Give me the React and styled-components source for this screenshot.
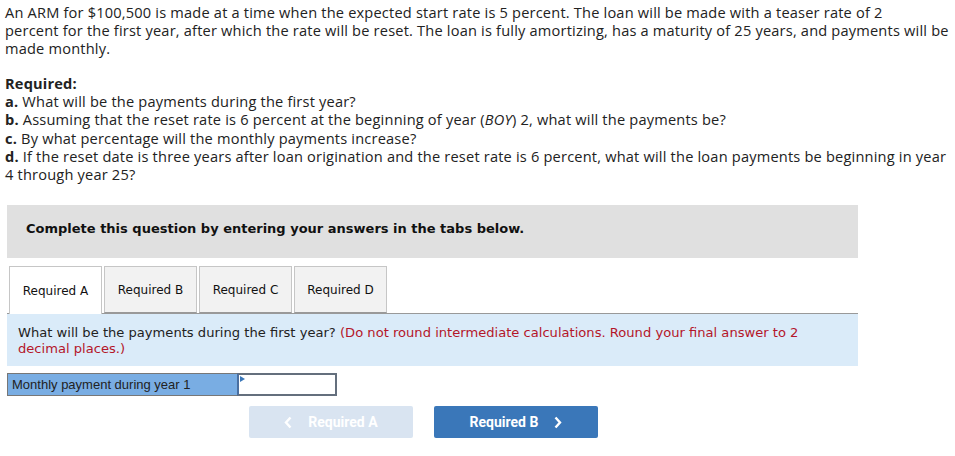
import React from "react";
import styled, { createGlobalStyle } from "styled-components";

const GlobalStyle = createGlobalStyle`
  body {
    margin: 0;
    background: #fff;
  }
`;

const tabs = ["Required A", "Required B", "Required C", "Required D"];

const ChevronIcon = ({ dir }) => (
  <svg width="8" height="13" viewBox="0 0 8 13" fill="none">
    <path
      d={dir === "left" ? "M6.5 1.5 L2 6.5 L6.5 11.5" : "M1.5 1.5 L6 6.5 L1.5 11.5"}
      stroke="currentColor"
      strokeWidth="2.4"
    />
  </svg>
);

const App = () => {
  return (
    <>
      <GlobalStyle />
      <Page>
        <Intro>
          An ARM for $100,500 is made at a time when the expected start rate is 5 percent. The loan
          will be made with a teaser rate of 2<br />
          percent for the first year, after which the rate will be reset. The loan is fully
          amortizing, has a maturity of 25 years, and payments will be
          <br />
          made monthly.
        </Intro>
        <Required>
          <strong>Required:</strong>
          <br />
          <strong>a.</strong> What will be the payments during the first year?
          <br />
          <strong>b.</strong> Assuming that the reset rate is 6 percent at the beginning of year (
          <em>BOY</em>) 2, what will the payments be?
          <br />
          <strong>c.</strong> By what percentage will the monthly payments increase?
          <br />
          <strong>d.</strong> If the reset date is three years after loan origination and the reset
          rate is 6 percent, what will the loan payments be beginning in year
          <br />4 through year 25?
        </Required>

        <Banner>Complete this question by entering your answers in the tabs below.</Banner>

        <TabRow>
          {tabs.map((t, i) => (
            <Tab key={t} active={i === 0}>
              {t}
            </Tab>
          ))}
        </TabRow>

        <Prompt>
          What will be the payments during the first year?{" "}
          <Hint>
            (Do not round intermediate calculations. Round your final answer to 2<br />
            decimal places.)
          </Hint>
        </Prompt>

        <AnswerRow>
          <AnswerLabel>Monthly payment during year 1</AnswerLabel>
          <AnswerCell>
            <Marker />
          </AnswerCell>
        </AnswerRow>

        <NavRow>
          <NavButton disabled>
            <ChevronIcon dir="left" />
            <span>Required A</span>
          </NavButton>
          <NavButton primary>
            <span>Required B</span>
            <ChevronIcon dir="right" />
          </NavButton>
        </NavRow>
      </Page>
    </>
  );
};

export default App;

const Page = styled.div`
  padding: 3px 5px 0 5px;
  width: 955px;
  box-sizing: border-box;
`;

const Intro = styled.p`
  margin: 0;
  font-family: "Open Sans", sans-serif;
  font-size: 14.6px;
  line-height: 18px;
  color: #222;
  white-space: nowrap;
  letter-spacing: 0.19px;
`;

const Required = styled.p`
  margin: 17px 0 0 0;
  font-family: "Open Sans", sans-serif;
  font-size: 14.6px;
  line-height: 18.2px;
  color: #222;
  white-space: nowrap;
  letter-spacing: 0.19px;

  strong {
    font-weight: 700;
  }
`;

const Banner = styled.div`
  margin: 22px 0 0 2px;
  width: 851px;
  height: 53px;
  background: #e0e0e0;
  display: flex;
  align-items: center;
  padding: 0 0 6px 19px;
  box-sizing: border-box;
  font-family: "DejaVu Sans", Verdana, sans-serif;
  font-size: 13px;
  font-weight: 700;
  color: #111;
`;

const TabRow = styled.div`
  display: flex;
  gap: 2px;
  margin: 8px 0 0 4px;
`;

const Tab = styled.div`
  width: 93px;
  box-sizing: border-box;
  border: 1px solid #c6c6c6;
  border-bottom: ${({ active }) => (active ? "none" : "1px solid #999")};
  background: ${({ active }) => (active ? "#fff" : "#f2f2f2")};
  display: flex;
  align-items: center;
  justify-content: center;
  font-family: "DejaVu Sans", Verdana, sans-serif;
  font-size: 12px;
  color: #111;
  margin-bottom: ${({ active }) => (active ? "-1px" : "0")};
  height: ${({ active }) => (active ? "48px" : "47px")};
  position: relative;
`;

const Prompt = styled.div`
  margin-left: 2px;
  width: 851px;
  box-sizing: border-box;
  background: #daebf9;
  border-top: 1px solid #999;
  padding: 11px 20px 8px 11px;
  font-family: "DejaVu Sans", Verdana, sans-serif;
  font-size: 13.1px;
  line-height: 16px;
  color: #222;
  min-height: 53px;
  white-space: nowrap;
`;

const Hint = styled.span`
  color: #b4162a;
`;

const AnswerRow = styled.div`
  display: flex;
  margin: 7px 0 0 2px;
  height: 23px;
`;

const AnswerLabel = styled.div`
  width: 230px;
  box-sizing: border-box;
  background: #79ade3;
  border: 1px solid #777;
  border-right: none;
  display: flex;
  align-items: center;
  padding-left: 4px;
  font-family: "Liberation Sans", Arial, sans-serif;
  font-size: 13px;
  color: #222;
`;

const AnswerCell = styled.div`
  width: 100px;
  box-sizing: border-box;
  border: 2px solid #646f7d;
  border-left: 2px solid #4a6fa0;
  background: #fff;
  position: relative;
`;

const Marker = styled.span`
  position: absolute;
  top: 1px;
  left: 1px;
  width: 0;
  height: 0;
  border-top: 3px solid transparent;
  border-bottom: 3px solid transparent;
  border-left: 5px solid #3a77b9;
`;

const NavRow = styled.div`
  display: flex;
  gap: 21px;
  margin: 10px 0 0 244px;
`;

const NavButton = styled.button`
  width: 164px;
  height: 32px;
  border: none;
  border-radius: 2px;
  background: ${({ primary }) => (primary ? "#3a77b9" : "#d9e4f1")};
  color: #fff;
  font-family: Roboto, "Liberation Sans", sans-serif;
  font-weight: 700;
  font-size: 14px;
  display: flex;
  align-items: center;
  justify-content: center;
  gap: 16px;
  cursor: pointer;
  padding: 0;
`;
